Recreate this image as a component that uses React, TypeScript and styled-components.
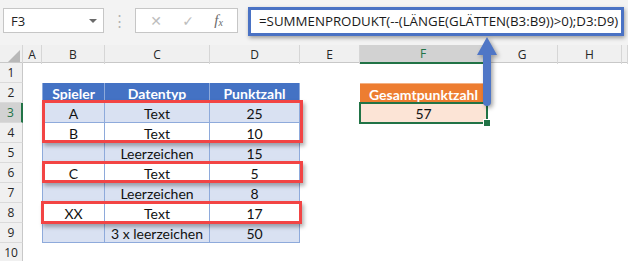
import styled, { createGlobalStyle, css } from 'styled-components';

const COLS = [23, 19, 63, 105, 90, 60, 127, 71, 64, 6];
const GRID = COLS.map((w) => `${w}px`).join(' ');
const LETTERS = ['A', 'B', 'C', 'D', 'E', 'F', 'G', 'H', ''];

type Kind = 'blank' | 'head' | 'band' | 'plain' | 'total-head' | 'total';

type RowData = {
  n: number;
  cells: [string, string, string] | null;
  kind?: 'head' | 'band' | 'plain';
  total?: { text: string; kind: Kind };
};

const ROWS: RowData[] = [
  { n: 1, cells: null },
  { n: 2, cells: ['Spieler', 'Datentyp', 'Punktzahl'], kind: 'head', total: { text: 'Gesamtpunktzahl', kind: 'total-head' } },
  { n: 3, cells: ['A', 'Text', '25'], kind: 'band', total: { text: '57', kind: 'total' } },
  { n: 4, cells: ['B', 'Text', '10'], kind: 'plain' },
  { n: 5, cells: ['', 'Leerzeichen', '15'], kind: 'band' },
  { n: 6, cells: ['C', 'Text', '5'], kind: 'plain' },
  { n: 7, cells: ['', 'Leerzeichen', '8'], kind: 'band' },
  { n: 8, cells: ['XX', 'Text', '17'], kind: 'plain' },
  { n: 9, cells: ['', '3 x leerzeichen', '50'], kind: 'band' },
  { n: 10, cells: null },
];

const GlobalStyle = createGlobalStyle`
  html, body {
    margin: 0;
    padding: 0;
    background: #ffffff;
  }
`;

export default function App() {
  return (
    <Page>
      <GlobalStyle />
      <TopBar>
        <NameBox>
          <span>F3</span>
          <DropArrow />
        </NameBox>
        <Grip>⋮</Grip>
        <ButtonBox>
          <GrayGlyph>✕</GrayGlyph>
          <GrayGlyph>✓</GrayGlyph>
          <Fx>
            f<sub>x</sub>
          </Fx>
        </ButtonBox>
        <FormulaBox>=SUMMENPRODUKT(--(LÄNGE(GLÄTTEN(B3:B9))&gt;0);D3:D9)</FormulaBox>
      </TopBar>

      <Sheet>
        <HeaderRow>
          <Corner>
            <svg width="12" height="12" viewBox="0 0 12 12">
              <polygon points="12,0 12,12 0,12" fill="#b8b8b8" />
            </svg>
          </Corner>
          {LETTERS.map((l, i) => (
            <ColHead key={i} $active={l === 'F'}>
              {l}
            </ColHead>
          ))}
        </HeaderRow>
        {ROWS.map((row) => (
          <Row key={row.n}>
            <RowHead $active={row.n === 3}>{row.n}</RowHead>
            <Cell $kind="blank" />
            {row.cells ? (
              row.cells.map((c, i) => (
                <Cell key={i} $kind={row.kind ?? 'blank'} $first={i === 0}>
                  {c}
                </Cell>
              ))
            ) : (
              <>
                <Cell $kind="blank" />
                <Cell $kind="blank" />
                <Cell $kind="blank" />
              </>
            )}
            <Cell $kind="blank" />
            <Cell $kind={row.total?.kind ?? 'blank'}>{row.total?.text}</Cell>
            <Cell $kind="blank" />
            <Cell $kind="blank" />
            <Cell $kind="blank" />
          </Row>
        ))}
      </Sheet>

      <Selection>
        <FillHandle />
      </Selection>

      <RedFrame $top={100} $left={42} $height={43} />
      <RedFrame $top={161} $left={42} $height={22} />
      <RedFrame $top={201} $left={41} $height={23} />

      <Arrow width="30" height="74" viewBox="0 0 30 74">
        <path
          d="M11 18 H19 V66 a4 4 0 0 1 -8 0 Z M5 19 L15 1 L25 19 Z"
          fill="#4f76c6"
        />
      </Arrow>
    </Page>
  );
}

const Page = styled.div`
  position: relative;
  width: 628px;
  height: 261px;
  overflow: hidden;
  background: #ffffff;
  font-family: 'Open Sans', 'Noto Sans', sans-serif;
`;

const TopBar = styled.div`
  height: 45px;
  background: #f3f3f3;
  display: flex;
  align-items: flex-start;
  padding: 8px 0 0 3px;
  box-sizing: border-box;
`;

const NameBox = styled.div`
  width: 101px;
  height: 25px;
  box-sizing: border-box;
  background: #ffffff;
  border: 1px solid #c6c6c6;
  display: flex;
  align-items: center;
  justify-content: space-between;
  padding: 0 6px 0 7px;
  font-size: 13px;
  color: #222;
`;

const DropArrow = styled.div`
  width: 0;
  height: 0;
  border-left: 4px solid transparent;
  border-right: 4px solid transparent;
  border-top: 4px solid #6a6a6a;
`;

const Grip = styled.div`
  width: 31px;
  text-align: center;
  color: #b4b4b4;
  font-size: 15px;
  line-height: 25px;
`;

const ButtonBox = styled.div`
  width: 103px;
  height: 25px;
  box-sizing: border-box;
  background: #ffffff;
  border: 1px solid #c6c6c6;
  display: flex;
  align-items: center;
  justify-content: space-around;
  padding: 0 4px;
`;

const GrayGlyph = styled.span`
  color: #bdbdbd;
  font-size: 14px;
  font-family: 'DejaVu Sans', sans-serif;
`;

const Fx = styled.span`
  color: #6b6b6b;
  font-family: 'Liberation Serif', serif;
  font-style: italic;
  font-size: 15px;

  sub {
    font-size: 10px;
    vertical-align: -1px;
  }
`;

const FormulaBox = styled.div`
  margin: -1px 0 0 10px;
  width: 376px;
  height: 29px;
  box-sizing: border-box;
  background: #ffffff;
  border: 3px solid #4a72c4;
  box-shadow: 1px 2px 4px rgba(0, 0, 0, 0.35);
  padding: 0 0 0 8px;
  font-size: 13.3px;
  line-height: 23px;
  color: #1a1a1a;
  white-space: nowrap;
`;

const Sheet = styled.div`
  display: flex;
  flex-direction: column;
  font-family: 'Lato', 'Liberation Sans', sans-serif;
`;

const HeaderRow = styled.div`
  display: grid;
  grid-template-columns: ${GRID};
  height: 18px;
  background: #f0f0f0;
  border-bottom: 1px solid #c8c8c8;
  box-sizing: border-box;
`;

const Corner = styled.div`
  display: flex;
  align-items: flex-end;
  justify-content: flex-end;
  padding: 0 2px 2px 0;
  border-right: 1px solid #d6d6d6;
`;

const ColHead = styled.div<{ $active?: boolean }>`
  display: flex;
  align-items: center;
  justify-content: center;
  font-family: 'Open Sans', sans-serif;
  font-size: 12px;
  color: #262626;
  border-right: 1px solid #d6d6d6;
  box-sizing: border-box;
  ${(p) =>
    p.$active &&
    css`
      background: #d2d2d2;
      color: #217346;
      border-bottom: 2px solid #217346;
    `}
`;

const Row = styled.div`
  display: grid;
  grid-template-columns: ${GRID};
  height: 20px;
`;

const RowHead = styled.div<{ $active?: boolean }>`
  display: flex;
  align-items: center;
  justify-content: center;
  background: #f0f0f0;
  font-family: 'Open Sans', sans-serif;
  font-size: 12px;
  color: #262626;
  border-right: 1px solid #c8c8c8;
  border-bottom: 1px solid #dadada;
  box-sizing: border-box;
  ${(p) =>
    p.$active &&
    css`
      background: #d2d2d2;
      color: #217346;
      border-right: 2px solid #217346;
    `}
`;

const kindStyles: Record<Kind, ReturnType<typeof css>> = {
  blank: css``,
  head: css`
    background: #4472c4;
    color: #ffffff;
    font-weight: 700;
    border-right: 1px solid #8eaadb;
    border-bottom: 1px solid #8eaadb;
  `,
  band: css`
    background: #d9e1f2;
    border-right: 1px solid #8eaadb;
    border-bottom: 1px solid #8eaadb;
  `,
  plain: css`
    background: #ffffff;
    border-right: 1px solid #8eaadb;
    border-bottom: 1px solid #8eaadb;
  `,
  'total-head': css`
    background: #ed7d31;
    color: #ffffff;
    font-weight: 700;
    border-top: 1px solid #f4b183;
  `,
  total: css`
    background: #fce4d6;
  `,
};

const Cell = styled.div<{ $kind: Kind; $first?: boolean }>`
  display: flex;
  align-items: center;
  justify-content: center;
  padding-top: 1px;
  box-sizing: border-box;
  font-size: 14px;
  color: #111;
  white-space: nowrap;
  ${(p) => kindStyles[p.$kind]}
  ${(p) =>
    p.$first &&
    p.$kind !== 'blank' &&
    css`
      border-left: 1px solid #8eaadb;
    `}
`;

const Selection = styled.div`
  position: absolute;
  left: 359px;
  top: 102px;
  width: 129px;
  height: 22px;
  box-sizing: border-box;
  border: 2px solid #217346;
`;

const FillHandle = styled.div`
  position: absolute;
  right: -5px;
  bottom: -5px;
  width: 6px;
  height: 6px;
  background: #217346;
  border: 1px solid #ffffff;
`;

const RedFrame = styled.div<{ $top: number; $left: number; $height: number }>`
  position: absolute;
  top: ${(p) => p.$top}px;
  left: ${(p) => p.$left}px;
  width: 261px;
  height: ${(p) => p.$height}px;
  box-sizing: border-box;
  border: 3px solid #f24444;
  box-shadow: 2px 3px 4px rgba(0, 0, 0, 0.3);
`;

const Arrow = styled.svg`
  position: absolute;
  left: 472px;
  top: 36px;
  filter: drop-shadow(2px 2px 2px rgba(0, 0, 0, 0.35));
`;
